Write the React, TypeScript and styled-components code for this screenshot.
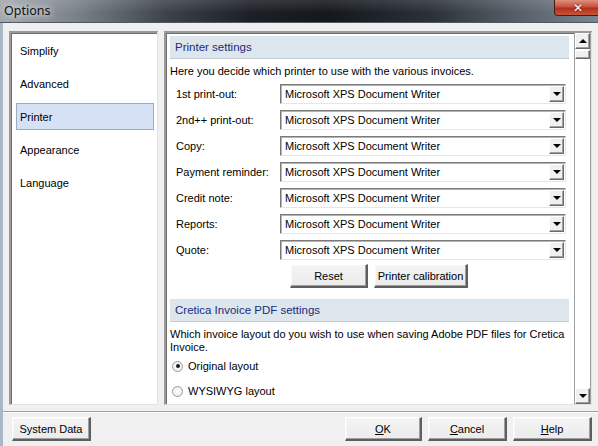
import React from "react";
import styled, { createGlobalStyle } from "styled-components";

const GlobalStyle = createGlobalStyle`
  html, body {
    margin: 0;
    padding: 0;
    overflow: hidden;
  }
  body {
    font-family: "Liberation Sans", Arial, sans-serif;
    font-size: 11px;
    color: #000;
  }
`;

const Window = styled.div`
  width: 598px;
  height: 446px;
  display: flex;
  flex-direction: column;
  background: #f0f0f0;
  overflow: hidden;
`;

const TitleBar = styled.div`
  height: 22px;
  flex-shrink: 0;
  display: flex;
  align-items: center;
  justify-content: space-between;
  border-bottom: 1px solid #4e5863;
  background:
    linear-gradient(180deg, rgba(255, 255, 255, 0.12) 0%, rgba(255, 255, 255, 0) 60%),
    linear-gradient(90deg, #a2a8ae 0%, #7d848c 12%, #3c424a 28%, #1c2026 42%, #14181d 55%, #2b3138 72%, #5a636c 88%, #7b858e 100%);
`;

const Title = styled.span`
  padding-left: 4px;
  font-family: "Noto Sans", "Liberation Sans", sans-serif;
  font-size: 12.5px;
  color: #101010;
  text-shadow: 0 0 6px rgba(255, 255, 255, 0.9), 0 0 10px rgba(255, 255, 255, 0.7);
  align-self: flex-start;
  margin-top: 2px;
`;

const CloseButton = styled.div`
  align-self: flex-start;
  width: 46px;
  height: 15px;
  margin-right: -4px;
  border: 1px solid #4a1a14;
  border-top: none;
  border-radius: 0 0 4px 4px;
  background: linear-gradient(180deg, #e0907f 0%, #c8523e 45%, #b03218 55%, #c9543a 100%);
  display: flex;
  align-items: center;
  justify-content: center;
  color: #fff;
  font-family: "DejaVu Sans", sans-serif;
  font-weight: 700;
  font-size: 12px;
  line-height: 1;
  text-shadow: 0 0 2px #4a1a14;
`;

const Body = styled.div`
  flex: 1;
  display: flex;
  flex-direction: column;
  border-left: 3px solid #a9b7c6;
  padding: 8px 6px 5px 6px;
  min-height: 0;
`;

const Panels = styled.div`
  display: flex;
  gap: 6px;
  height: 374px;
`;

const Sunken = styled.div`
  background: #fff;
  border-style: solid;
  border-width: 2px 1px 1px 2px;
  border-color: #9a9a9a #e3e3e3 #e3e3e3 #9a9a9a;
  box-shadow: inset 1px 1px 0 #6e6e6e;
  box-sizing: border-box;
`;

const NavList = styled(Sunken)`
  width: 149px;
  padding: 4px 3px 0 5px;
  display: flex;
  flex-direction: column;
  gap: 6px;
`;

const NavItem = styled.div<{ $active?: boolean }>`
  height: 27px;
  box-sizing: border-box;
  display: flex;
  align-items: center;
  padding-left: 3px;
  border: 1px solid ${(p) => (p.$active ? "#97acc9" : "transparent")};
  background: ${(p) => (p.$active ? "#d5e2f6" : "transparent")};
`;

const SettingsPanel = styled(Sunken)`
  flex: 1;
  display: flex;
  min-width: 0;
`;

const ScrollContent = styled.div`
  flex: 1;
  padding: 3px 5px 0 4px;
  display: flex;
  flex-direction: column;
  overflow: hidden;
`;

const SectionHeader = styled.div`
  height: 23px;
  flex-shrink: 0;
  box-sizing: border-box;
  display: flex;
  align-items: center;
  padding-left: 5px;
  background: #dde6ed;
  border-bottom: 1px solid #c2cbd3;
  color: #1b2a7c;
  font-size: 11.5px;
`;

const Description = styled.p<{ $top: number; $bottom: number }>`
  margin: ${(p) => p.$top}px 0 ${(p) => p.$bottom}px 0;
  line-height: 13px;
`;

const FieldList = styled.div`
  display: flex;
  flex-direction: column;
  gap: 6px;
  padding-left: 6px;
`;

const FieldRow = styled.div`
  display: flex;
  align-items: center;
  height: 20px;
`;

const FieldLabel = styled.span`
  width: 104px;
  flex-shrink: 0;
`;

const Select = styled.div`
  width: 286px;
  height: 20px;
  box-sizing: border-box;
  display: flex;
  align-items: center;
  justify-content: space-between;
  background: #fff;
  border-style: solid;
  border-width: 1px;
  border-color: #7a7a7a #e6e6e6 #e6e6e6 #7a7a7a;
  box-shadow: inset 1px 1px 0 #b4b4b4;
  padding: 0 1px 0 4px;
`;

const DropButton = styled.div`
  width: 15px;
  height: 16px;
  box-sizing: border-box;
  background: #f0f0f0;
  border-style: solid;
  border-width: 1px;
  border-color: #fff #6a6a6a #6a6a6a #fff;
  box-shadow: inset -1px -1px 0 #a0a0a0;
  display: flex;
  align-items: center;
  justify-content: center;
`;

const ArrowDown = styled.span`
  width: 0;
  height: 0;
  border-left: 4px solid transparent;
  border-right: 4px solid transparent;
  border-top: 4px solid #000;
`;

const ArrowUp = styled.span`
  width: 0;
  height: 0;
  border-left: 4px solid transparent;
  border-right: 4px solid transparent;
  border-bottom: 4px solid #000;
`;

const ButtonRow = styled.div`
  display: flex;
  gap: 6px;
  padding-left: 120px;
  margin: 4px 0 11px 0;
`;

const Button = styled.button<{ $width: number }>`
  width: ${(p) => p.$width}px;
  height: 24px;
  box-sizing: border-box;
  font-family: "Liberation Sans", Arial, sans-serif;
  font-size: 11px;
  color: #000;
  background: linear-gradient(180deg, #f4f4f4 0%, #ebebeb 100%);
  border-style: solid;
  border-width: 1px 2px 2px 1px;
  border-color: #fff #5e5e5e #5e5e5e #fff;
  box-shadow: inset -1px -1px 0 #a0a0a0, inset 1px 1px 0 #f8f8f8;
  padding: 0;
  display: flex;
  align-items: center;
  justify-content: center;
`;

const RadioGroup = styled.div`
  display: flex;
  flex-direction: column;
  gap: 11px;
`;

const RadioRow = styled.label`
  display: flex;
  align-items: center;
  gap: 5px;
  padding-left: 2px;
  height: 14px;
`;

const RadioCircle = styled.span<{ $checked?: boolean }>`
  width: 11px;
  height: 11px;
  border-radius: 50%;
  box-sizing: border-box;
  border: 1px solid #9b9b9b;
  background: radial-gradient(circle, #fff 0%, #e8e8e8 100%);
  display: flex;
  align-items: center;
  justify-content: center;
  &::after {
    content: "";
    width: 4px;
    height: 4px;
    border-radius: 50%;
    background: ${(p) => (p.$checked ? "#1a1a1a" : "transparent")};
  }
`;

const Scrollbar = styled.div`
  width: 17px;
  flex-shrink: 0;
  display: flex;
  flex-direction: column;
  background: #fff;
  border-left: 1px solid #a0a0a0;
  border-right: 1px solid #a0a0a0;
  box-sizing: border-box;
`;

const ScrollButton = styled.div`
  height: 16px;
  flex-shrink: 0;
  box-sizing: border-box;
  background: #f0f0f0;
  border-style: solid;
  border-width: 1px;
  border-color: #fff #6a6a6a #6a6a6a #fff;
  box-shadow: inset -1px -1px 0 #a0a0a0;
  display: flex;
  align-items: center;
  justify-content: center;
`;

const ScrollThumb = styled.div`
  height: 9px;
  margin-top: 1px;
  box-sizing: border-box;
  background: #f0f0f0;
  border-style: solid;
  border-width: 1px;
  border-color: #fff #6a6a6a #6a6a6a #fff;
  box-shadow: inset -1px -1px 0 #a0a0a0;
`;

const ScrollTrack = styled.div`
  flex: 1;
`;

const Separator = styled.div`
  margin: 6px -6px 0 -6px;
  height: 0;
  border-top: 1px solid #a0a0a0;
  border-bottom: 1px solid #fff;
`;

const Footer = styled.div`
  display: flex;
  align-items: center;
  margin-top: 4px;
  padding-left: 3px;
`;

const FooterRight = styled.div`
  margin-left: auto;
  display: flex;
  gap: 6px;
`;

const navItems = ["Simplify", "Advanced", "Printer", "Appearance", "Language"];

const printerFields = [
  "1st print-out:",
  "2nd++ print-out:",
  "Copy:",
  "Payment reminder:",
  "Credit note:",
  "Reports:",
  "Quote:",
];

const App: React.FC = () => {
  return (
    <>
      <GlobalStyle />
      <Window>
        <TitleBar>
          <Title>Options</Title>
          <CloseButton>✕</CloseButton>
        </TitleBar>
        <Body>
          <Panels>
            <NavList>
              {navItems.map((item) => (
                <NavItem key={item} $active={item === "Printer"}>
                  {item}
                </NavItem>
              ))}
            </NavList>
            <SettingsPanel>
              <ScrollContent>
                <SectionHeader>Printer settings</SectionHeader>
                <Description $top={6} $bottom={6}>
                  Here you decide which printer to use with the various invoices.
                </Description>
                <FieldList>
                  {printerFields.map((label) => (
                    <FieldRow key={label}>
                      <FieldLabel>{label}</FieldLabel>
                      <Select>
                        Microsoft XPS Document Writer
                        <DropButton>
                          <ArrowDown />
                        </DropButton>
                      </Select>
                    </FieldRow>
                  ))}
                </FieldList>
                <ButtonRow>
                  <Button $width={78}>Reset</Button>
                  <Button $width={94}>Printer calibration</Button>
                </ButtonRow>
                <SectionHeader>Cretica Invoice PDF settings</SectionHeader>
                <Description $top={6} $bottom={5}>
                  Which invoice layout do you wish to use when saving Adobe PDF files for Cretica
                  Invoice.
                </Description>
                <RadioGroup>
                  <RadioRow>
                    <RadioCircle $checked />
                    Original layout
                  </RadioRow>
                  <RadioRow>
                    <RadioCircle />
                    WYSIWYG layout
                  </RadioRow>
                </RadioGroup>
              </ScrollContent>
              <Scrollbar>
                <ScrollButton>
                  <ArrowUp />
                </ScrollButton>
                <ScrollThumb />
                <ScrollTrack />
                <ScrollButton>
                  <ArrowDown />
                </ScrollButton>
              </Scrollbar>
            </SettingsPanel>
          </Panels>
          <Separator />
          <Footer>
            <Button $width={79}>System Data</Button>
            <FooterRight>
              <Button $width={77}>
                <span>
                  <u>O</u>K
                </span>
              </Button>
              <Button $width={79}>
                <span>
                  <u>C</u>ancel
                </span>
              </Button>
              <Button $width={79}>
                <span>
                  <u>H</u>elp
                </span>
              </Button>
            </FooterRight>
          </Footer>
        </Body>
      </Window>
    </>
  );
};

export default App;
